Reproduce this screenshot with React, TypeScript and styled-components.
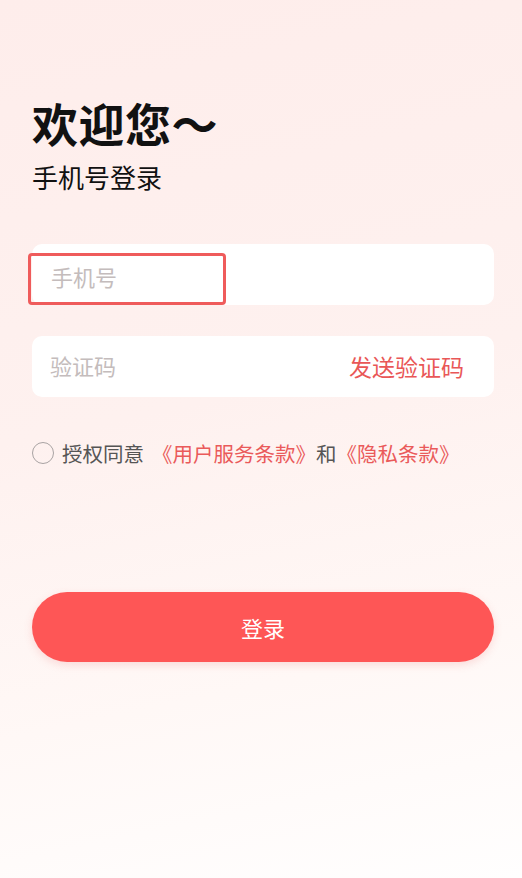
import React, { useState } from "react";
import styled, { createGlobalStyle } from "styled-components";

const GlobalStyle = createGlobalStyle`
  html, body {
    margin: 0;
    padding: 0;
  }
  body {
    font-family: "Noto Sans CJK SC", "Noto Sans", sans-serif;
  }
  * {
    box-sizing: border-box;
  }
`;

const App = () => {
  const [agree, setAgree] = useState(false);

  return (
    <Page>
      <GlobalStyle />
      <Header>
        <Title>欢迎您～</Title>
        <SubTitle>手机号登录</SubTitle>
      </Header>
      <Form>
        <Field>
          <PhoneInput placeholder="手机号" />
        </Field>
        <Field>
          <CodeInput placeholder="验证码" />
          <SendCode>发送验证码</SendCode>
        </Field>
        <Agreement>
          <Radio checked={agree} onClick={() => setAgree(prev => !prev)} />
          <AgreeText>授权同意</AgreeText>
          <Link $gap>《用户服务条款》</Link>
          <AgreeText>和</AgreeText>
          <Link>《隐私条款》</Link>
        </Agreement>
      </Form>
      <LoginButton>登录</LoginButton>
    </Page>
  );
};

export default App;

const Page = styled.div`
  width: 522px;
  min-height: 878px;
  padding: 95px 28px 0 32px;
  background: linear-gradient(168deg, #feedeb 0%, #fef1ef 45%, #fff8f6 75%, #fffefe 100%);
`;

const Header = styled.div`
  display: flex;
  flex-direction: column;
`;

const Title = styled.h1`
  margin: 0;
  font-size: 46px;
  line-height: 54px;
  font-weight: 700;
  color: #111;
  letter-spacing: 0.5px;
`;

const SubTitle = styled.p`
  margin: 10px 0 0;
  font-size: 26px;
  line-height: 36px;
  color: #111;
`;

const Form = styled.div`
  display: flex;
  flex-direction: column;
  gap: 31px;
  margin-top: 49px;
`;

const Field = styled.div`
  height: 61px;
  display: flex;
  align-items: center;
  justify-content: space-between;
  background: #fff;
  border-radius: 10px;
  padding: 0 30px 0 18px;
`;

const BaseInput = styled.input`
  border: none;
  background: transparent;
  font-family: inherit;
  font-size: 22px;
  color: #333;
  outline: none;
  &::placeholder {
    color: #c4bcbc;
  }
`;

const PhoneInput = styled(BaseInput)`
  width: 198px;
  height: 52px;
  margin: 8px 0 0 -22px;
  padding: 0 0 5px 20px;
  border: 3px solid #ef5b5b;
  border-radius: 4px;
`;

const CodeInput = styled(BaseInput)`
  width: 200px;
  padding: 0 0 3px;
`;

const SendCode = styled.span`
  font-size: 23px;
  color: #e95757;
  cursor: pointer;
  padding-bottom: 2px;
`;

const Agreement = styled.div`
  display: flex;
  align-items: center;
  margin-top: 10px;
  font-size: 20.5px;
`;

const Radio = styled.span<{ checked: boolean }>`
  width: 22px;
  height: 22px;
  border-radius: 50%;
  border: 1.5px solid #a9a3a3;
  background: ${props => (props.checked ? "#fe5656" : "transparent")};
  margin-right: 8px;
  cursor: pointer;
`;

const AgreeText = styled.span`
  color: #555;
`;

const Link = styled.span<{ $gap?: boolean }>`
  color: #ea5a5a;
  margin-left: ${props => (props.$gap ? "8px" : "0")};
`;

const LoginButton = styled.button`
  display: block;
  width: 462px;
  height: 70px;
  margin-top: 124px;
  border: none;
  border-radius: 35px;
  background: #fe5656;
  color: #fff;
  font-family: inherit;
  font-size: 22px;
  box-shadow: 0 3px 8px rgba(230, 90, 90, 0.18);
  cursor: pointer;
`;
